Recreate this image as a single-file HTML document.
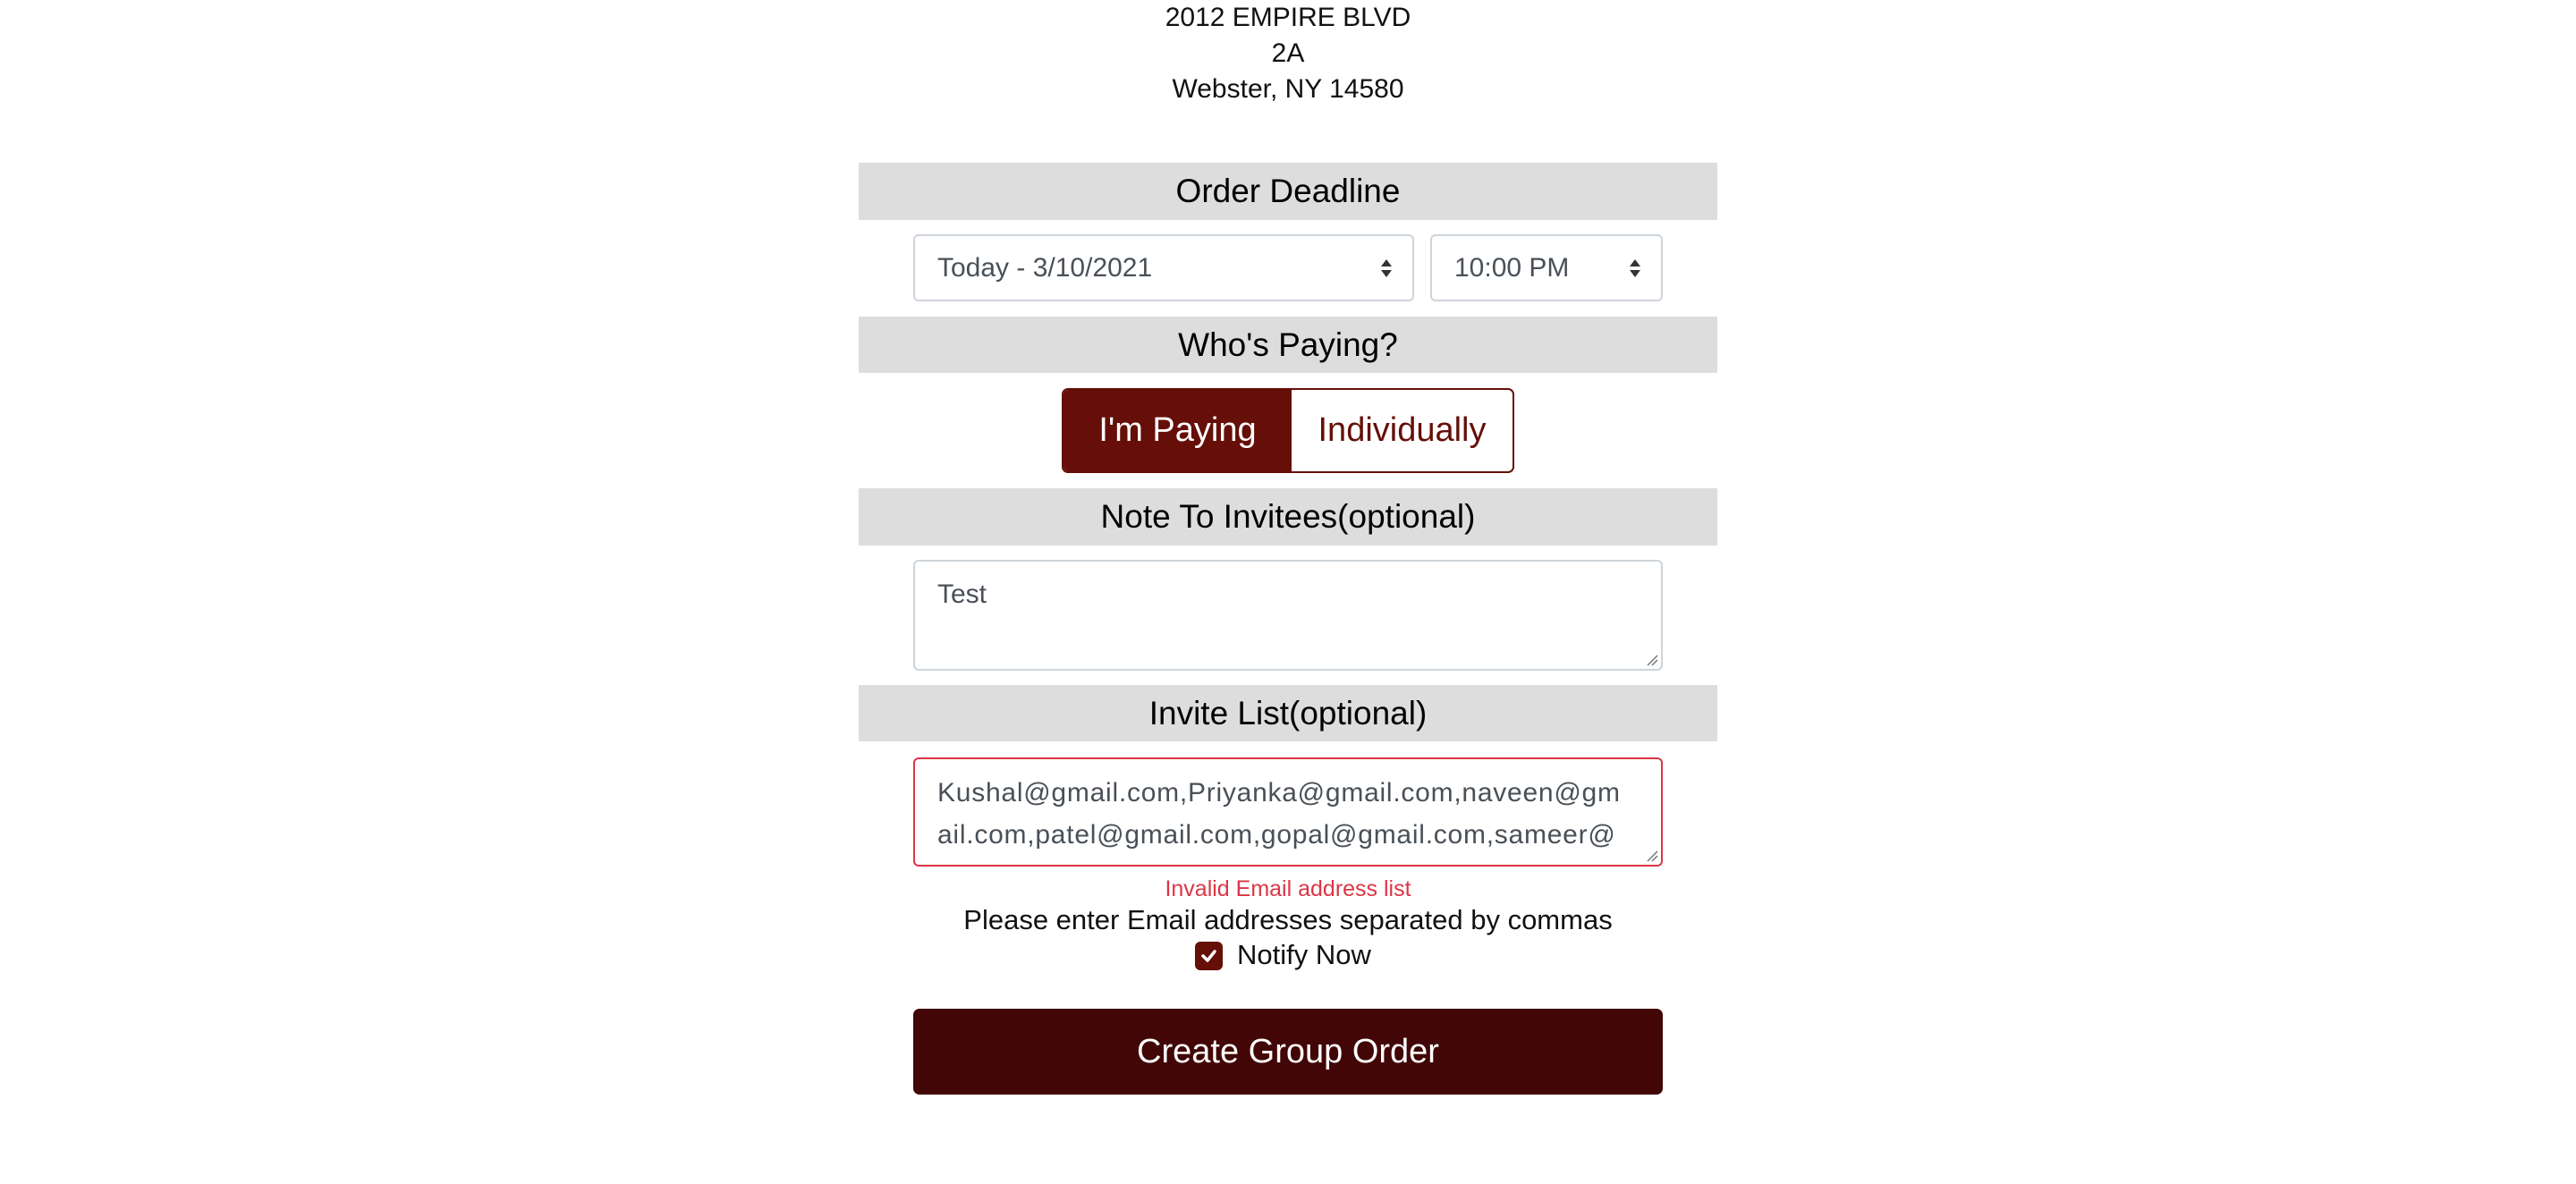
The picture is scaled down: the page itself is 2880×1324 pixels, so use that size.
<!DOCTYPE html>
<html><head><meta charset="utf-8"><style>
*{box-sizing:border-box;margin:0;padding:0}
body{width:2880px;height:1324px;background:#fff;position:relative;overflow:hidden;font-family:"Liberation Sans",Helvetica,Arial,sans-serif;color:#111}
.a{position:absolute}
.c{text-align:center}
.addr{left:0;width:2880px;font-size:30px;line-height:40px;top:0}
.band{left:960px;width:960px;background:#dddddd;font-size:37px;display:flex;align-items:center;justify-content:center;color:#000}
.sel{border:2px solid #ced4da;border-radius:6px;background:#fff;font-size:30px;color:#495057;display:flex;align-items:center;padding-left:25px}
.arr{position:absolute;right:22px;top:24px;width:14px;height:24px}
.ta{left:1021px;width:838px;border:2px solid #ced4da;border-radius:6px;font-size:30px;color:#495057;padding:13px 25px;line-height:47px}
.grip{position:absolute;right:3px;bottom:3px;width:14px;height:14px}
</style></head><body>
<div class="a addr c">2012 EMPIRE BLVD<br>2A<br>Webster, NY 14580</div>

<div class="a band" style="top:182px;height:64px">Order Deadline</div>
<div class="a sel" style="left:1021px;top:262px;width:560px;height:75px">Today - 3/10/2021
<svg class="arr" viewBox="0 0 14 24"><path d="M7 2 L13 10 H1Z M7 22 L13 14 H1Z" fill="#333"/></svg></div>
<div class="a sel" style="left:1599px;top:262px;width:260px;height:75px">10:00 PM
<svg class="arr" viewBox="0 0 14 24"><path d="M7 2 L13 10 H1Z M7 22 L13 14 H1Z" fill="#333"/></svg></div>

<div class="a band" style="top:354px;height:63px">Who's Paying?</div>
<div class="a" style="left:1187px;top:434px;width:506px;height:95px;border:2px solid #650f08;border-radius:7px;overflow:hidden;display:flex">
<div style="width:255px;background:#650f08;color:#fff;font-size:38px;display:flex;align-items:center;justify-content:center">I'm Paying</div>
<div style="flex:1;color:#650f08;font-size:38px;display:flex;align-items:center;justify-content:center">Individually</div>
</div>

<div class="a band" style="top:546px;height:64px">Note To Invitees(optional)</div>
<div class="a ta" style="top:626px;height:124px">Test
<svg class="grip" viewBox="0 0 14 14"><path d="M2 13 L13 2 M7 13 L13 7" stroke="#777" stroke-width="1.5"/></svg></div>

<div class="a band" style="top:766px;height:63px">Invite List(optional)</div>
<div class="a ta" style="top:847px;height:122px;border-color:#dc3545;padding-top:14px;letter-spacing:0.75px">Kushal@gmail.com,Priyanka@gmail.com,naveen@gm<br>ail.com,patel@gmail.com,gopal@gmail.com,sameer@
<svg class="grip" viewBox="0 0 14 14"><path d="M2 13 L13 2 M7 13 L13 7" stroke="#777" stroke-width="1.5"/></svg></div>

<div class="a c" style="left:0;width:2880px;top:980px;font-size:25px;color:#dc3545">Invalid Email address list</div>
<div class="a c" style="left:0;width:2880px;top:1011px;font-size:31px">Please enter Email addresses separated by commas</div>
<div class="a" style="left:1336px;top:1053px;width:31px;height:32px;background:#650f08;border-radius:6px">
<svg viewBox="0 0 31 32" width="31" height="32"><path d="M9 16 L14 21 L22 11" stroke="#fff" stroke-width="3.5" fill="none" stroke-linecap="round" stroke-linejoin="round"/></svg></div>
<div class="a" style="left:1383px;top:1050px;font-size:31px">Notify Now</div>

<div class="a" style="left:1021px;top:1128px;width:838px;height:96px;background:#420606;border-radius:7px;color:#fff;font-size:38px;display:flex;align-items:center;justify-content:center">Create Group Order</div>
</body></html>
